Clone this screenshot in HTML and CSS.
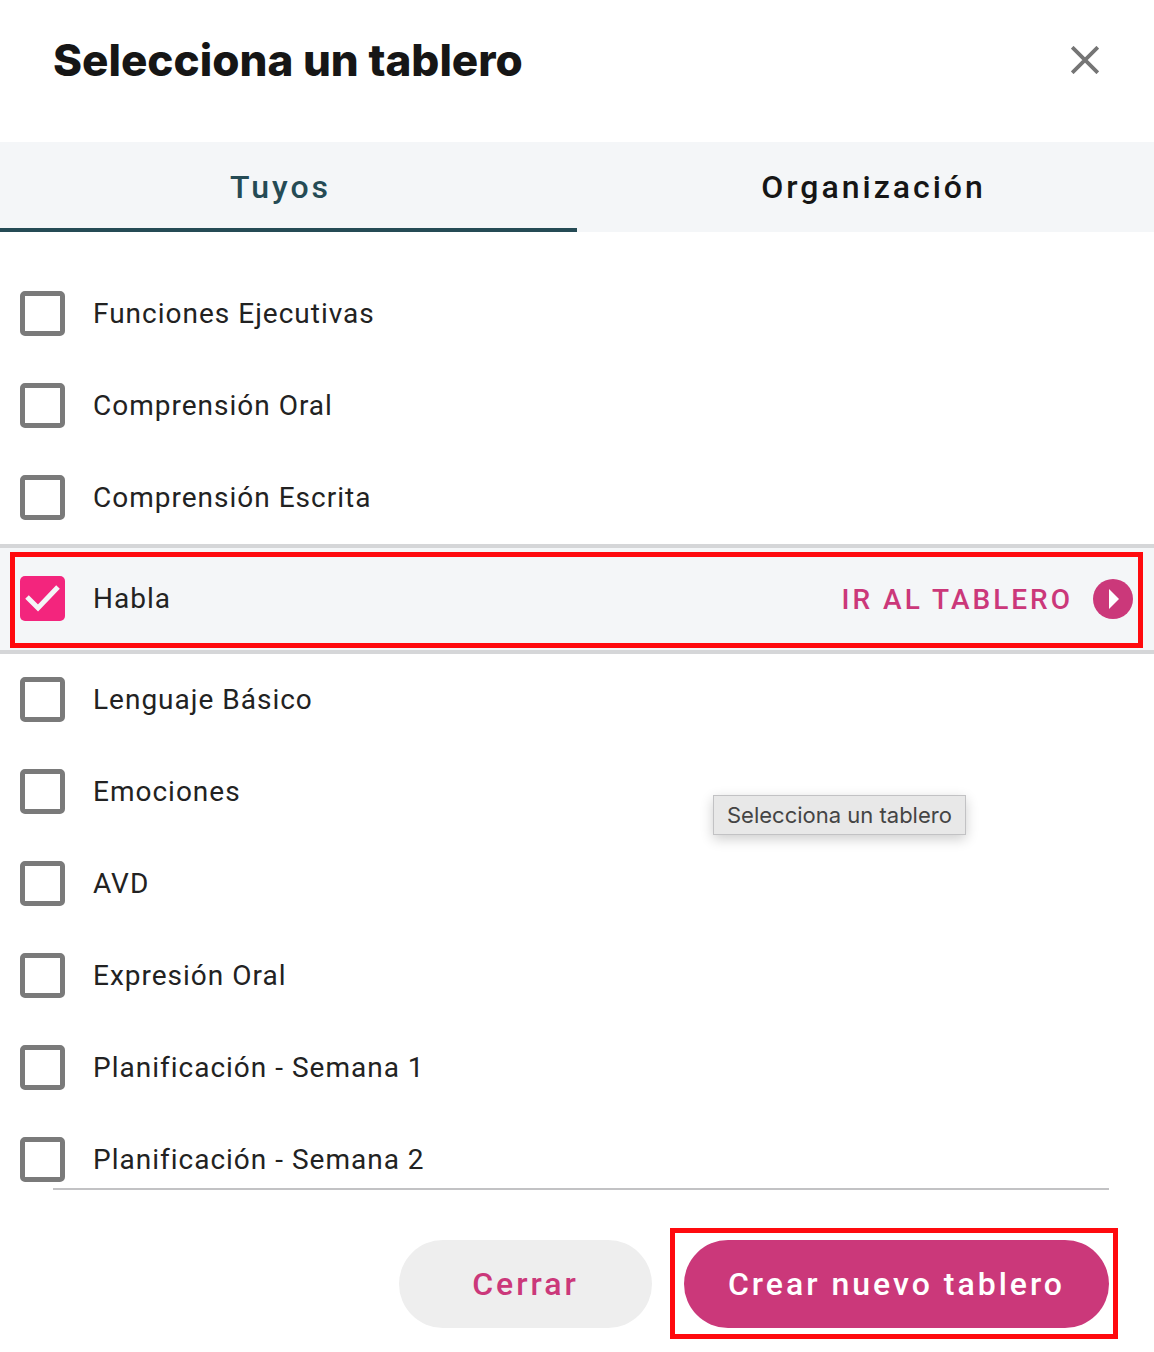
FILE: index.html
```html
<!DOCTYPE html>
<html lang="es">
<head>
  <meta charset="utf-8">
  <meta name="viewport" content="width=device-width, initial-scale=1">
  <title>Selecciona un tablero</title>
  <link rel="stylesheet" href="styles.css">
</head>
<body>
<div class="dialog" role="dialog" aria-labelledby="dialog-title">
  <header class="dialog-header">
    <h1 id="dialog-title">Selecciona un tablero</h1>
    <button class="close-button" type="button" aria-label="Cerrar ventana">
      <svg width="28" height="28" viewBox="0 0 28 28"><path d="M1.2 1.2 26.8 26.8M26.8 1.2 1.2 26.8" fill="none" stroke="#757575" stroke-width="3.8"/></svg>
    </button>
  </header>

  <div class="tabs" role="tablist">
    <button class="tab active" type="button" role="tab" aria-selected="true">Tuyos</button>
    <button class="tab" type="button" role="tab" aria-selected="false">Organización</button>
  </div>

  <ul class="board-list">
    <li class="board">
      <input type="checkbox" id="board1">
      <label for="board1">Funciones Ejecutivas</label>
    </li>
    <li class="board">
      <input type="checkbox" id="board2">
      <label for="board2">Comprensión Oral</label>
    </li>
    <li class="board">
      <input type="checkbox" id="board3">
      <label for="board3">Comprensión Escrita</label>
    </li>
    <li class="board selected">
      <input type="checkbox" id="board4" checked>
      <label for="board4">Habla</label>
      <a class="board-link" href="#habla">
        IR AL TABLERO
        <svg width="40" height="40" viewBox="0 0 40 40"><circle cx="20" cy="20" r="20" fill="#cb387a"/><path d="M16 10 26 20 16 30z" fill="#fff"/></svg>
      </a>
    </li>
    <li class="board">
      <input type="checkbox" id="board5">
      <label for="board5">Lenguaje Básico</label>
    </li>
    <li class="board">
      <input type="checkbox" id="board6">
      <label for="board6">Emociones</label>
    </li>
    <li class="board">
      <input type="checkbox" id="board7">
      <label for="board7">AVD</label>
    </li>
    <li class="board">
      <input type="checkbox" id="board8">
      <label for="board8">Expresión Oral</label>
    </li>
    <li class="board">
      <input type="checkbox" id="board9">
      <label for="board9">Planificación - Semana 1</label>
    </li>
    <li class="board">
      <input type="checkbox" id="board10">
      <label for="board10">Planificación - Semana 2</label>
    </li>
  </ul>

  <footer class="dialog-footer">
    <button class="button" type="button">Cerrar</button>
    <div class="highlight">
      <button class="button primary" type="button">Crear nuevo tablero</button>
    </div>
  </footer>

  <div class="tooltip" role="tooltip">Selecciona un tablero</div>
</div>
</body>
</html>
```
FILE: styles.css
```css
* {
  box-sizing: border-box;
}
body {
  margin: 0;
  background-color: #fff;
  color: #222;
  font-family: Roboto, "Liberation Sans", sans-serif;
  font-size: 28px;
}
button {
  border: none;
  font-family: inherit;
  cursor: pointer;
}
.dialog {
  position: relative;
  display: flex;
  flex-direction: column;
  height: 100vh;
}
.dialog-header {
  display: flex;
  justify-content: space-between;
  align-items: center;
  padding: 32px 55px 54px 53px;
}
h1 {
  margin: 0;
  color: #161616;
  font-family: Inter, sans-serif;
  font-size: 44px;
  font-weight: 800;
  line-height: 56px;
}
.close-button {
  display: flex;
  padding: 0;
  background: none;
}
.tabs {
  display: grid;
  grid-template-columns: 1fr 1fr;
  background-color: #f4f6f8;
}
.tab {
  height: 90px;
  padding: 4px 0 0 16px;
  border-bottom: 4px solid transparent;
  background: none;
  color: #161616;
  font-size: 32px;
  font-weight: 500;
  letter-spacing: 3px;
}
.tab.active {
  padding: 4px 16px 0 0;
  border-bottom-color: #254b55;
  color: #254b55;
}
.board-list {
  flex: 1;
  min-height: 0;
  margin: 0;
  padding: 36px 0 0;
  overflow-y: auto;
  scrollbar-width: none;
  list-style: none;
}
.board {
  position: relative;
  display: flex;
  align-items: center;
  gap: 28px;
  height: 92px;
  padding: 0 21px 2px 20px;
  letter-spacing: 1px;
}
.board label {
  flex: 1;
}
.board input {
  appearance: none;
  flex: none;
  width: 45px;
  height: 45px;
  margin: 0;
  border: 5px solid #7a7a7a;
  border-radius: 5px;
  cursor: pointer;
}
.board input:checked {
  border: none;
  background: #f3257d url("data:image/svg+xml,%3Csvg xmlns='http://www.w3.org/2000/svg' viewBox='0 0 45 45'%3E%3Cpath d='M7 21 18 32 38 11' fill='none' stroke='%23f4f6f8' stroke-width='5'/%3E%3C/svg%3E");
}
.board.selected {
  height: 110px;
  border-top: 4px solid #d5d6d8;
  border-bottom: 4px solid #d5d6d8;
  background-color: #f4f6f8;
}
.board.selected::after {
  content: "";
  position: absolute;
  inset: 4px 11px 2px 10px;
  border: 5px solid #ff0a0e;
  pointer-events: none;
}
.board-link {
  display: flex;
  align-items: center;
  gap: 20px;
  padding-top: 2px;
  color: #cb387a;
  font-weight: 500;
  letter-spacing: 3px;
  text-decoration: none;
}
.dialog-footer {
  display: flex;
  justify-content: flex-end;
  gap: 32px;
  margin: 0 45px 0 53px;
  padding: 50px 0 24px;
  border-top: 2px solid #c2c2c4;
}
.button {
  height: 88px;
  padding: 0 73px;
  border-radius: 44px;
  background-color: #eee;
  color: #cb387a;
  font-size: 32px;
  font-weight: 500;
  letter-spacing: 3px;
}
.button.primary {
  padding: 0 44px;
  background-color: #cb387a;
  color: #fff;
}
.highlight {
  position: relative;
}
.highlight::after {
  content: "";
  position: absolute;
  inset: -12px -9px -11px -14px;
  border: 5px solid #ff0a0e;
  pointer-events: none;
}
.tooltip {
  position: absolute;
  top: 795px;
  left: 713px;
  padding: 0 13px;
  border: 1px solid #c2c2c4;
  background-color: #e8e8e8;
  box-shadow: 0 4px 12px rgba(0, 0, 0, 0.2);
  color: #444;
  font-family: Inter, sans-serif;
  font-size: 22px;
  line-height: 38px;
}
```
